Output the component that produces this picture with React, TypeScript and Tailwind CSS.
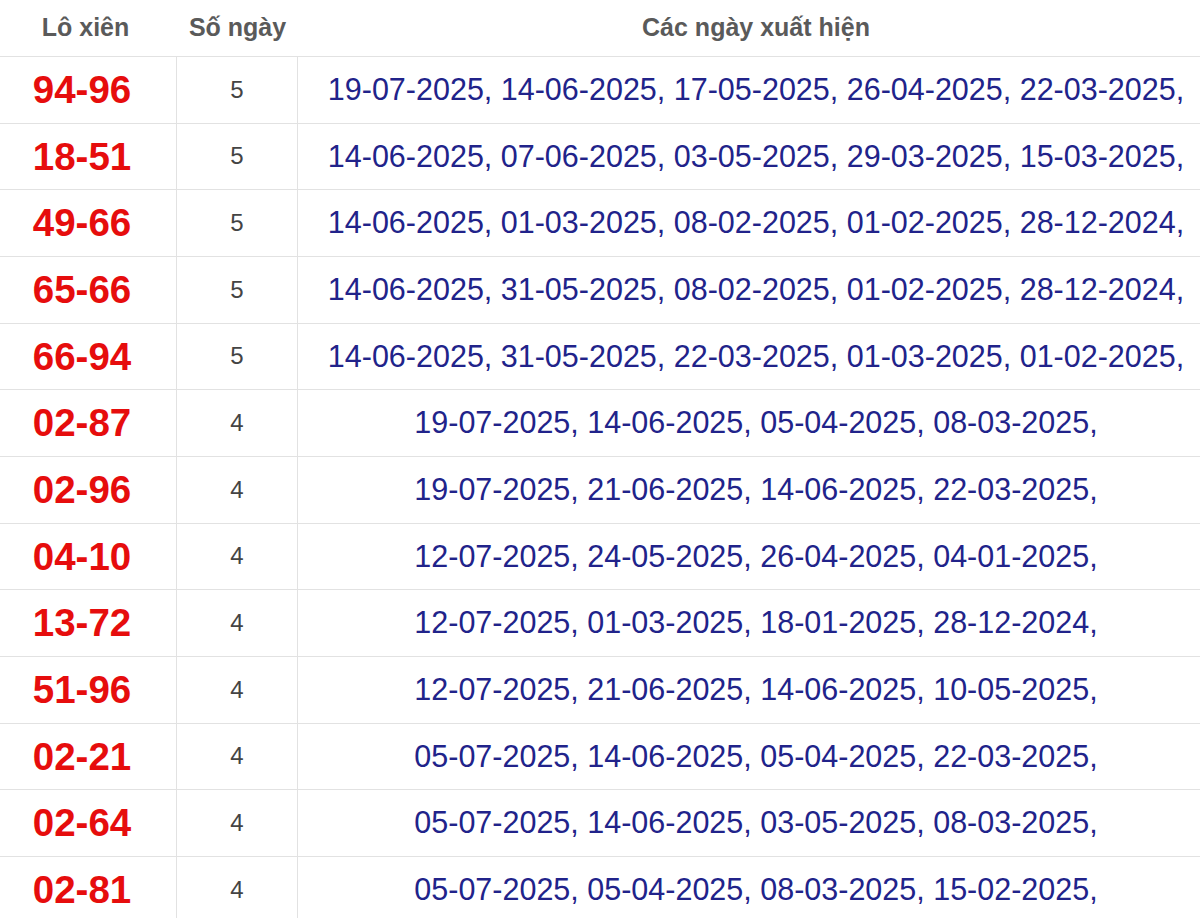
const rows: { pair: string; count: number; dates: string[] }[] = [
  { pair: "94-96", count: 5, dates: ["19-07-2025", "14-06-2025", "17-05-2025", "26-04-2025", "22-03-2025"] },
  { pair: "18-51", count: 5, dates: ["14-06-2025", "07-06-2025", "03-05-2025", "29-03-2025", "15-03-2025"] },
  { pair: "49-66", count: 5, dates: ["14-06-2025", "01-03-2025", "08-02-2025", "01-02-2025", "28-12-2024"] },
  { pair: "65-66", count: 5, dates: ["14-06-2025", "31-05-2025", "08-02-2025", "01-02-2025", "28-12-2024"] },
  { pair: "66-94", count: 5, dates: ["14-06-2025", "31-05-2025", "22-03-2025", "01-03-2025", "01-02-2025"] },
  { pair: "02-87", count: 4, dates: ["19-07-2025", "14-06-2025", "05-04-2025", "08-03-2025"] },
  { pair: "02-96", count: 4, dates: ["19-07-2025", "21-06-2025", "14-06-2025", "22-03-2025"] },
  { pair: "04-10", count: 4, dates: ["12-07-2025", "24-05-2025", "26-04-2025", "04-01-2025"] },
  { pair: "13-72", count: 4, dates: ["12-07-2025", "01-03-2025", "18-01-2025", "28-12-2024"] },
  { pair: "51-96", count: 4, dates: ["12-07-2025", "21-06-2025", "14-06-2025", "10-05-2025"] },
  { pair: "02-21", count: 4, dates: ["05-07-2025", "14-06-2025", "05-04-2025", "22-03-2025"] },
  { pair: "02-64", count: 4, dates: ["05-07-2025", "14-06-2025", "03-05-2025", "08-03-2025"] },
  { pair: "02-81", count: 4, dates: ["05-07-2025", "05-04-2025", "08-03-2025", "15-02-2025"] },
];

export default function App() {
  return (
    <div className="w-[1200px] h-[918px] overflow-hidden bg-white font-['Liberation_Sans',Arial,sans-serif]">
      {/* Header */}
      <div className="flex h-[57px] border-b border-[#e2e2e2] text-[25px] font-bold text-[#5a5a5a]">
        <div className="w-[177px] flex items-center justify-center pr-[6px]">Lô xiên</div>
        <div className="w-[121px] flex items-center justify-center">Số ngày</div>
        <div className="flex-1 flex items-center justify-center pl-[14px]">Các ngày xuất hiện</div>
      </div>

      {rows.map((r) => (
        <div key={r.pair} className="flex h-[66.67px] border-b border-[#e2e2e2]">
          <div className="w-[177px] border-r border-[#e2e2e2] flex items-center justify-center pr-[12px] text-[38.5px] font-bold text-[#e60d0d]">
            {r.pair}
          </div>
          <div className="w-[121px] border-r border-[#e2e2e2] flex items-center justify-center text-[24px] text-[#444]">
            {r.count}
          </div>
          <div className="flex-1 flex items-center justify-center pl-[14px] text-[30.5px] text-[#21238a] whitespace-nowrap">
            {r.dates.map((d) => d + ",").join(" ")}
          </div>
        </div>
      ))}
    </div>
  );
}
